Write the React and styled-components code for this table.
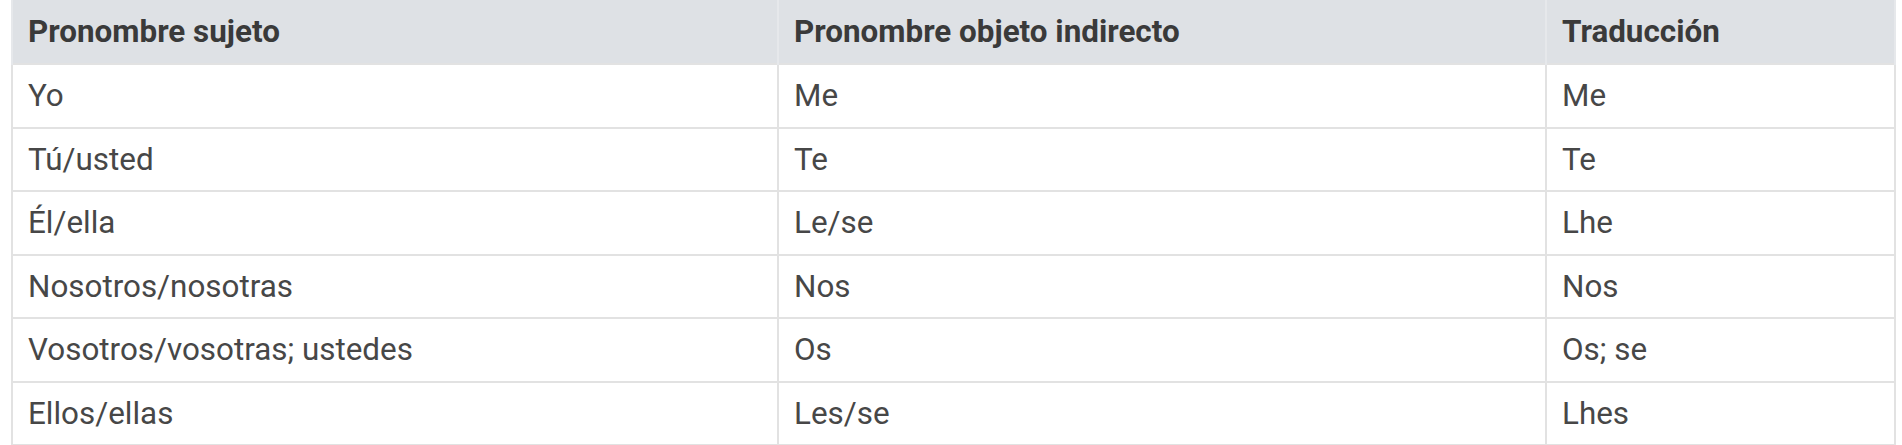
import React from 'react';
import styled, { createGlobalStyle } from 'styled-components';

const GlobalStyle = createGlobalStyle`
  html, body {
    margin: 0;
    padding: 0;
    background: #ffffff;
  }
  body {
    font-family: Roboto, "Liberation Sans", Arial, sans-serif;
  }
`;

const Wrapper = styled.div`
  padding: 0 8px 0 11px;
`;

const Table = styled.table`
  width: 1883px;
  border-collapse: collapse;
  table-layout: fixed;
  font-size: 31.4px;
  color: #474747;
`;

const HeadCell = styled.th`
  background: #dee1e5;
  color: #3a3a3a;
  font-weight: 700;
  text-align: left;
  padding: 8px 15px;
  height: 47px;
  line-height: 47px;
  border-left: 2px solid #e6e8eb;
  border-right: 2px solid #e6e8eb;
  border-bottom: 0;
`;

const Cell = styled.td`
  padding: 8px 15px;
  height: 45.5px;
  line-height: 45.5px;
  border: 2px solid #e2e2e2;
  white-space: nowrap;
`;

const columns = [
  { title: 'Pronombre sujeto', width: 766 },
  { title: 'Pronombre objeto indirecto', width: 768 },
  { title: 'Traducción', width: 349 },
];

const rows = [
  ['Yo', 'Me', 'Me'],
  ['Tú/usted', 'Te', 'Te'],
  ['Él/ella', 'Le/se', 'Lhe'],
  ['Nosotros/nosotras', 'Nos', 'Nos'],
  ['Vosotros/vosotras; ustedes', 'Os', 'Os; se'],
  ['Ellos/ellas', 'Les/se', 'Lhes'],
];

const App = () => (
  <Wrapper>
    <GlobalStyle />
    <Table>
      <colgroup>
        {columns.map((col) => (
          <col key={col.title} style={{ width: `${col.width}px` }} />
        ))}
      </colgroup>
      <thead>
        <tr>
          {columns.map((col) => (
            <HeadCell key={col.title}>{col.title}</HeadCell>
          ))}
        </tr>
      </thead>
      <tbody>
        {rows.map((row, i) => (
          <tr key={i}>
            {row.map((value, j) => (
              <Cell key={j}>{value}</Cell>
            ))}
          </tr>
        ))}
      </tbody>
    </Table>
  </Wrapper>
);

export default App;
